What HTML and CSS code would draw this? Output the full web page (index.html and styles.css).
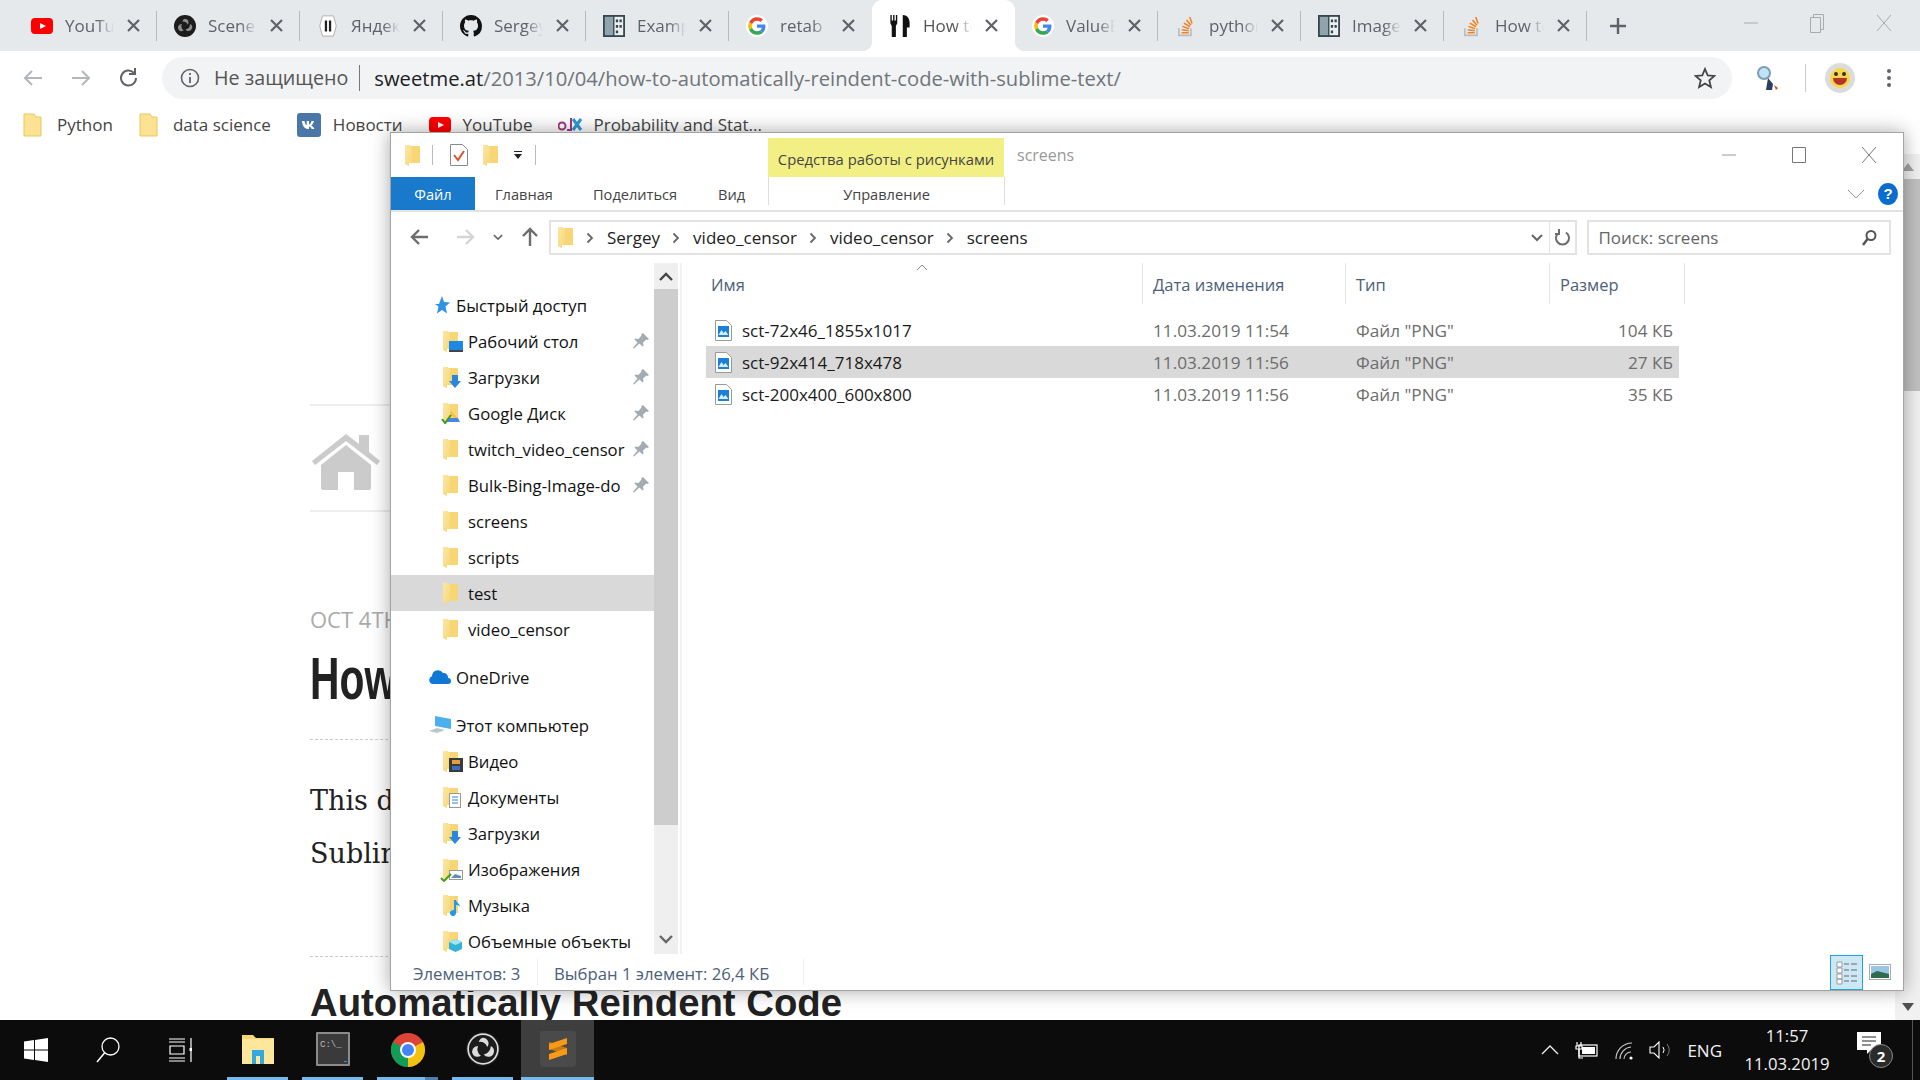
FILE: index.html
```html
<!DOCTYPE html>
<html lang="ru">
  <head>
    <meta charset="UTF-8" />
    <meta name="viewport" content="width=device-width, initial-scale=1.0" />
    <link rel="stylesheet" href="styles.css">
    <title>How to automatically reindent code with Sublime Text</title>
  </head>
  <body>
    <svg class="defs" width="0" height="0">
      <linearGradient id="fldgrad" x1="0" y1="0" x2="1" y2="1"><stop offset="0" stop-color="#fbe7a6"/><stop offset="1" stop-color="#f8d675"/></linearGradient>
      <symbol id="yt" viewBox="0 0 22 16"><rect width="22" height="16" rx="4" fill="#f00"/><path d="M9 5l6 3-6 3z" fill="#fff"/></symbol>
      <symbol id="obs" viewBox="0 0 24 24"><circle cx="12" cy="12" r="12" fill="#1c1c1c"/><circle cx="12" cy="12" r="10.500" fill="none" stroke="#ddd" stroke-width="1.200"/><path d="M12 4a4 4 0 0 1 3 6.500a6 6 0 0 0-6-3.500A4 4 0 0 1 12 4zM19.500 15a4 4 0 0 1-7 .8a6 6 0 0 0 5-6 4 4 0 0 1 2 5.200zM5 16a4 4 0 0 1 3.500-6.200a6 6 0 0 0 2 6.900A4 4 0 0 1 5 16z" fill="#ddd"/></symbol>
      <symbol id="obsfav" viewBox="0 0 24 24"><circle cx="12" cy="12" r="12" fill="#1c1c1c"/><path d="M12 4a4 4 0 0 1 3 6.500a6 6 0 0 0-6-3.500A4 4 0 0 1 12 4zM19.500 15a4 4 0 0 1-7 .8a6 6 0 0 0 5-6 4 4 0 0 1 2 5.200zM5 16a4 4 0 0 1 3.500-6.200a6 6 0 0 0 2 6.900A4 4 0 0 1 5 16z" fill="#8d8d8d"/></symbol>
      <symbol id="yandex" viewBox="0 0 20 24"><path d="M4 1h12l3 11-3 11H4L1 12z" fill="#fff" stroke="#aaa"/><rect x="6.500" y="6" width="2.500" height="12" fill="#222"/><rect x="11" y="6" width="2.500" height="12" fill="#222"/></symbol>
      <symbol id="github" viewBox="0 0 16 16"><path d="M8 0C3.580 0 0 3.580 0 8c0 3.540 2.290 6.530 5.470 7.590.4.070.55-.17.55-.38 0-.19-.01-.82-.01-1.490-2.010.37-2.530-.49-2.690-.94-.09-.23-.48-.94-.82-1.130-.28-.15-.68-.52-.01-.53.63-.01 1.080.58 1.230.82.72 1.210 1.870.87 2.330.66.07-.52.28-.87.51-1.070-1.780-.2-3.640-.89-3.640-3.950 0-.87.31-1.590.82-2.150-.08-.2-.36-1.020.08-2.120 0 0 .67-.21 2.200.82.64-.18 1.320-.27 2-.27s1.360.09 2 .27c1.530-1.040 2.200-.82 2.200-.82.44 1.100.16 1.920.08 2.120.51.56.82 1.270.82 2.150 0 3.070-1.870 3.750-3.650 3.950.29.25.54.73.54 1.480 0 1.070-.01 1.930-.01 2.200 0 .21.15.46.55.38A8.013 8.013 0 0 0 16 8c0-4.420-3.580-8-8-8z" fill="#111"/></symbol>
      <symbol id="book" viewBox="0 0 24 24"><rect width="24" height="24" fill="#37474f"/><rect x="2" y="2" width="9" height="20" fill="#90a4ae"/><rect x="12.500" y="2" width="9.500" height="20" fill="#eceff1"/><path d="M14 5h2.500v3H14zM18 5h2.500v3H18zM14 11h2.500v3H14zM18 11h2.500v3H18zM14 17h2.500v3H14z" fill="#37474f"/></symbol>
      <symbol id="google" viewBox="-6 -6 60 60"><circle cx="24" cy="24" r="30" fill="#fff"/><path fill="#EA4335" d="M24 9.500c3.540 0 6.710 1.220 9.210 3.600l6.850-6.850C35.900 2.380 30.470 0 24 0 14.620 0 6.510 5.380 2.560 13.220l7.980 6.190C12.430 13.720 17.740 9.500 24 9.500z"/><path fill="#4285F4" d="M46.980 24.550c0-1.570-.15-3.090-.38-4.550H24v9.020h12.940c-.58 2.960-2.260 5.480-4.780 7.180l7.730 6c4.510-4.180 7.090-10.360 7.090-17.650z"/><path fill="#FBBC05" d="M10.530 28.590c-.48-1.450-.76-2.990-.76-4.590s.27-3.140.76-4.590l-7.980-6.190C.92 16.460 0 20.120 0 24c0 3.880.92 7.540 2.560 10.780l7.970-6.190z"/><path fill="#34A853" d="M24 48c6.480 0 11.930-2.130 15.890-5.810l-7.730-6c-2.150 1.450-4.920 2.300-8.160 2.300-6.260 0-11.570-4.220-13.470-9.910l-7.980 6.190C6.510 42.620 14.620 48 24 48z"/></symbol>
      <symbol id="fork" viewBox="0 0 16 16"><path d="M1 0h1v4h1V0h1v4h1V0h1v6L5 8v8H2V8L1 6zM10 0c3 0 5 2 5 6v3h-2v7h-3z" fill="#111"/></symbol>
      <symbol id="so" viewBox="0 0 16 20"><path d="M1.500 12v6.500h11V12" fill="none" stroke="#bcbbbb" stroke-width="1.500"/><path d="M4 15.500h6.500v1.400H4zM4.200 12.700l6.400.9-.2 1.400-6.400-.9zM5 9.700l6 2.100-.5 1.300-6-2.100zM6.500 6.800l5.500 3.300-.8 1.200-5.500-3.300zM9 4l4.100 4.800-1.100.9L7.900 4.900zM12 1.500l2.200 5.900-1.300.5-2.200-5.900z" fill="#f48024"/></symbol>
      <symbol id="fld" viewBox="0 0 15 21"><path d="M0 0h5v1h10v17H4v3l-4-2z" fill="#f8d675"/><path d="M0 0h4l3 2v16H4v3l-4-2z" fill="url(#fldgrad)"/></symbol>
      <symbol id="bmfold" viewBox="0 0 19 24"><path d="M1 1h10l2 3h5v19H1z" fill="#fde293" stroke="#e9c85a"/></symbol>
      <symbol id="tabx" viewBox="0 0 13 13"><path d="M1 1l11 11M12 1L1 12" stroke="#5f6368" stroke-width="2.200"/></symbol>
      <symbol id="pin" viewBox="0 0 16 16"><path d="M10 0l6 6-1.500 1-1-.5-3.500 3 .5 3-1 1-3-3L1 15.500 0 15l4.500-5.500-3-3 1-1 3 .5 3-3.500-.5-1z" fill="#a3abb3"/></symbol>
      <symbol id="png" viewBox="0 0 17 21"><path d="M.5.500h11l5 5v15H.5z" fill="#fff" stroke="#9a9a9a"/><rect x="3" y="6" width="11" height="11" fill="#1e7fd8"/><path d="M3.500 15l3-5 2 3 2-2 3 4z" fill="#d5ecff"/></symbol>
      <symbol id="chev" viewBox="0 0 8 12"><path d="M1.500 1.500L6 6l-4.500 4.500" fill="none" stroke="#666" stroke-width="1.800"/></symbol>
      <symbol id="down" viewBox="0 0 12 8"><path d="M1 1l5 5 5-5" fill="none" stroke="#666" stroke-width="2"/></symbol>
    </svg>

    <div class="tabbar">
      <div class="tab"><svg class="fav"><use href="#yt"/></svg><span class="tab-title">YouTube</span><svg class="tab-x"><use href="#tabx"/></svg></div>
      <div class="tab"><svg class="fav"><use href="#obsfav"/></svg><span class="tab-title">Scene</span><svg class="tab-x"><use href="#tabx"/></svg></div>
      <div class="tab"><svg class="fav"><use href="#yandex"/></svg><span class="tab-title">Яндекс</span><svg class="tab-x"><use href="#tabx"/></svg></div>
      <div class="tab"><svg class="fav"><use href="#github"/></svg><span class="tab-title">Sergey</span><svg class="tab-x"><use href="#tabx"/></svg></div>
      <div class="tab"><svg class="fav"><use href="#book"/></svg><span class="tab-title">Example</span><svg class="tab-x"><use href="#tabx"/></svg></div>
      <div class="tab no-sep"><svg class="fav"><use href="#google"/></svg><span class="tab-title">retab</span><svg class="tab-x"><use href="#tabx"/></svg></div>
      <div class="tab tab-active"><svg class="fav"><use href="#fork"/></svg><span class="tab-title">How to</span><svg class="tab-x"><use href="#tabx"/></svg></div>
      <div class="tab"><svg class="fav"><use href="#google"/></svg><span class="tab-title">ValueE</span><svg class="tab-x"><use href="#tabx"/></svg></div>
      <div class="tab"><svg class="fav"><use href="#so"/></svg><span class="tab-title">python</span><svg class="tab-x"><use href="#tabx"/></svg></div>
      <div class="tab"><svg class="fav"><use href="#book"/></svg><span class="tab-title">Image</span><svg class="tab-x"><use href="#tabx"/></svg></div>
      <div class="tab"><svg class="fav"><use href="#so"/></svg><span class="tab-title">How to</span><svg class="tab-x"><use href="#tabx"/></svg></div>
      <svg class="newtab" width="18" height="18" viewBox="0 0 18 18"><path d="M9 1v16M1 9h16" stroke="#5f6368" stroke-width="2.400"/></svg>
      <div class="winbtns">
        <svg width="16" height="16" viewBox="0 0 16 16"><path d="M1 8h14" stroke="#a8abae"/></svg>
        <svg width="16" height="24" viewBox="0 0 16 24"><path d="M1.500 6.500h10v15h-10zM4.500 6.500v-3h10v15h-3" fill="none" stroke="#a8abae"/></svg>
        <svg width="18" height="18" viewBox="0 0 18 18"><path d="M2 1l14 16M16 1L2 17" stroke="#a8abae"/></svg>
      </div>
    </div>

    <div class="toolbar">
      <svg class="nav-ic" width="22" height="22" viewBox="0 0 22 22"><path d="M20 11H3M10 4l-7 7 7 7" fill="none" stroke="#b4b7ba" stroke-width="2"/></svg>
      <svg class="nav-ic" width="22" height="22" viewBox="0 0 22 22"><path d="M2 11h17M12 4l7 7-7 7" fill="none" stroke="#b4b7ba" stroke-width="2"/></svg>
      <svg class="nav-ic" width="22" height="22" viewBox="0 0 22 22"><path d="M18 11a7.500 7.500 0 1 1-2.200-5.300M17 1v6h-6" fill="none" stroke="#5f6368" stroke-width="2"/></svg>
      <div class="omnibox">
        <svg width="20" height="20" viewBox="0 0 20 20"><circle cx="10" cy="10" r="8.500" fill="none" stroke="#5f6368" stroke-width="1.600"/><path d="M10 9v6M10 5v2" stroke="#5f6368" stroke-width="1.800"/></svg>
        <span class="insecure">Не защищено</span>
        <span class="url"><b>sweetme.at</b>/2013/10/04/how-to-automatically-reindent-code-with-sublime-text/</span>
        <svg class="star" width="22" height="22" viewBox="0 0 22 22"><path d="M11 2l2.700 6.300 6.800.6-5.200 4.500 1.600 6.700L11 16.500 5.100 20.100l1.600-6.700L1.500 8.900l6.800-.6z" fill="none" stroke="#444" stroke-width="1.800"/></svg>
      </div>
      <svg class="ext" width="24" height="26" viewBox="0 0 24 26"><circle cx="8" cy="8" r="6" fill="#bfe3f5" stroke="#7b9db3" stroke-width="2"/><path d="M12 13l5 6-1 6h-6l1-6z" fill="#2c3e63"/><path d="M18 20l4 3-2 2z" fill="#c0562b"/></svg>
      <span class="tool-sep"></span>
      <svg class="avatar" width="30" height="30" viewBox="0 0 30 30"><circle cx="15" cy="15" r="15" fill="#dcdcdc"/><circle cx="15" cy="15" r="10" fill="#f9d648"/><circle cx="11" cy="11" r="2" fill="#333"/><circle cx="19" cy="11" r="2" fill="#333"/><path d="M8 15h14a7 7 0 0 1-14 0z" fill="#b3332a"/></svg>
      <svg class="dots" width="6" height="22" viewBox="0 0 6 22"><circle cx="3" cy="4" r="2" fill="#5f6368"/><circle cx="3" cy="11" r="2" fill="#5f6368"/><circle cx="3" cy="18" r="2" fill="#5f6368"/></svg>
    </div>

    <div class="bookmarks">
      <span class="bm"><svg width="19" height="24"><use href="#bmfold"/></svg>Python</span>
      <span class="bm"><svg width="19" height="24"><use href="#bmfold"/></svg>data science</span>
      <span class="bm bm-tight"><svg width="24" height="24" viewBox="0 0 24 24"><rect width="24" height="24" rx="3" fill="#4a76a8"/><path d="M5 8h2.500c.3 2.500 1.300 4 2.200 4.300V8H12v3.500c1-.2 2-1.500 2.500-3.500H17c-.5 2.200-1.700 3.700-2.700 4.400 1 .6 2.400 1.800 3.100 3.600h-2.700c-.5-1.400-1.600-2.500-2.700-2.600V16h-.8C7.800 16 5.300 13 5 8z" fill="#fff"/></svg>Новости</span>
      <span class="bm bm-tight"><svg width="22" height="20"><use href="#yt"/></svg>YouTube</span>
      <span class="bm bm-edx"><svg width="25" height="20" viewBox="0 0 25 20"><circle cx="4" cy="11" r="3.500" fill="none" stroke="#a23a7e" stroke-width="2"/><path d="M13 3v12h-4" fill="none" stroke="#a23a7e" stroke-width="2"/><path d="M15 4l8 11M23 4l-8 11" stroke="#2d9ad6" stroke-width="3"/></svg>Probability and Stat...</span>
    </div>

    <main class="page">
      <article class="post">
        <div class="home">
          <svg width="72" height="58" viewBox="0 0 72 58"><path d="M36 2L2 29l3 4L36 9l31 24 3-4-11-9V3H49v9z" fill="#cbcbcb"/><path d="M11 33L36 13l25 20v23a2 2 0 0 1-2 2H44V40H28v18H13a2 2 0 0 1-2-2z" fill="#cbcbcb"/></svg>
        </div>
        <p class="post-date">OCT 4TH, 2013</p>
        <h1 class="post-title">How to Automatically Reindent Code with Sublime Text</h1>
        <div class="post-rule"></div>
        <p class="post-text">This describes how to automatically reindent code in</p>
        <p class="post-text">Sublime Text.</p>
        <div class="post-rule post-rule-2"></div>
        <h2 class="post-h2">Automatically Reindent Code</h2>
      </article>
      <div class="scroll">
        <svg width="12" height="8" viewBox="0 0 12 8"><path d="M6 0l6 8H0z" fill="#a3a3a3"/></svg>
        <span class="scroll-thumb"></span>
        <svg class="scroll-end" width="12" height="8" viewBox="0 0 12 8"><path d="M0 0h12L6 8z" fill="#505050"/></svg>
      </div>
    </main>

    <section class="explorer">
      <header class="ex-title">
        <svg class="qa" width="15" height="21"><use href="#fld"/></svg>
        <span class="qa-sep"></span>
        <svg class="qa" width="18" height="22" viewBox="0 0 18 22"><path d="M.5.500h12l5 5v16H.5z" fill="#fff" stroke="#8a8a8a"/><path d="M4 11l4 5 6-9" fill="none" stroke="#d9532c" stroke-width="2"/></svg>
        <svg class="qa" width="15" height="21"><use href="#fld"/></svg>
        <svg class="qa" width="10" height="10" viewBox="0 0 10 10"><path d="M1 1h8v1H1zM1 4h8L5 9z" fill="#222"/></svg>
        <span class="qa-sep"></span>
        <span class="ctx-tool">Средства работы с рисунками</span>
        <span class="ex-name">screens</span>
        <div class="ex-btns">
          <svg width="16" height="16" viewBox="0 0 16 16"><path d="M1 8h14" stroke="#999"/></svg>
          <svg width="16" height="16" viewBox="0 0 16 16"><path d="M1.500 .5h13v15h-13z" fill="none" stroke="#777"/></svg>
          <svg width="16" height="16" viewBox="0 0 16 16"><path d="M1 0l14 16M15 0L1 16" stroke="#777"/></svg>
        </div>
      </header>

      <nav class="ribbon">
        <span class="rb-file">Файл</span>
        <span class="rb-tab rb-home">Главная</span>
        <span class="rb-tab rb-share">Поделиться</span>
        <span class="rb-tab rb-view">Вид</span>
        <span class="rb-manage">Управление</span>
        <svg class="rb-fold" width="18" height="10" viewBox="0 0 18 10"><path d="M1 1l8 8 8-8" fill="none" stroke="#9a9a9a"/></svg>
        <svg width="20" height="22" viewBox="0 0 20 22"><ellipse cx="10" cy="11" rx="10" ry="11" fill="#0a6cce"/><text x="10" y="16" text-anchor="middle" class="help-q">?</text></svg>
      </nav>

      <div class="ex-address">
        <svg class="ex-nav" width="20" height="18" viewBox="0 0 20 18"><path d="M19 9H3M10 2L3 9l7 7" fill="none" stroke="#6d6d6d" stroke-width="2.400"/></svg>
        <svg class="ex-nav ex-fwd" width="20" height="18" viewBox="0 0 20 18"><path d="M1 9h16M10 2l7 7-7 7" fill="none" stroke="#d5d5d5" stroke-width="2.400"/></svg>
        <svg class="ex-nav ex-recent" width="10" height="7"><use href="#down"/></svg>
        <svg class="ex-nav ex-up" width="18" height="20" viewBox="0 0 18 20"><path d="M9 19V3M2 9l7-7 7 7" fill="none" stroke="#6d6d6d" stroke-width="2.400"/></svg>
        <div class="crumbs">
          <svg width="15" height="21"><use href="#fld"/></svg>
          <svg class="crumb-sep crumb-first" width="8" height="12"><use href="#chev"/></svg><span>Sergey</span>
          <svg class="crumb-sep" width="8" height="12"><use href="#chev"/></svg><span>video_censor</span>
          <svg class="crumb-sep" width="8" height="12"><use href="#chev"/></svg><span>video_censor</span>
          <svg class="crumb-sep" width="8" height="12"><use href="#chev"/></svg><span>screens</span>
          <svg class="crumb-drop" width="12" height="8"><use href="#down"/></svg>
          <span class="crumb-refresh"><svg width="16" height="18" viewBox="0 0 16 18"><path d="M4 3.500a6.500 6.500 0 1 0 7 0M4 0v5H0" fill="none" stroke="#6d6d6d" stroke-width="2"/></svg></span>
        </div>
        <div class="ex-search">
          <span>Поиск: screens</span>
          <svg width="16" height="18" viewBox="0 0 16 18"><circle cx="10" cy="6.500" r="4.500" fill="none" stroke="#555" stroke-width="2"/><path d="M6.500 10L2 16" stroke="#555" stroke-width="2.500"/></svg>
        </div>
      </div>

      <div class="ex-main">
        <aside class="tree">
          <ul class="tree-list">
            <li class="top"><svg class="top-ic" width="20" height="18" viewBox="0 0 20 18"><path d="M12 0l2 6 6 .5-4.500 4 1.500 7-5-3.500-5 3.500 1.500-7L5 8h4zM0 6h5M1 9h4M2 12h3" fill="#2d93e6"/></svg>Быстрый доступ</li>
            <li><span class="ic"><svg width="15" height="21"><use href="#fld"/></svg><svg class="badge" width="14" height="11" viewBox="0 0 14 11"><rect width="14" height="9" fill="#1e88e5"/><rect y="9" width="14" height="2" fill="#444"/></svg></span>Рабочий стол<svg class="pin" width="16" height="16"><use href="#pin"/></svg></li>
            <li><span class="ic"><svg width="15" height="21"><use href="#fld"/></svg><svg class="badge" width="12" height="13" viewBox="0 0 12 13"><path d="M3 0h6v6h3l-6 7-6-7h3z" fill="#2a86dc"/></svg></span>Загрузки<svg class="pin" width="16" height="16"><use href="#pin"/></svg></li>
            <li><span class="ic"><svg width="15" height="21"><use href="#fld"/></svg><svg class="badge badge-wide" width="20" height="14" viewBox="0 0 20 14"><path d="M5 12h14l-2-4H7z" fill="#4a86e8"/><path d="M10 1l7 7h-4L9 4z" fill="#f6c244"/><path d="M1 9l3 4 6-8" fill="none" stroke="#3a9c2b" stroke-width="2"/></svg></span>Google Диск<svg class="pin" width="16" height="16"><use href="#pin"/></svg></li>
            <li><span class="ic"><svg width="15" height="21"><use href="#fld"/></svg></span>twitch_video_censor<svg class="pin" width="16" height="16"><use href="#pin"/></svg></li>
            <li><span class="ic"><svg width="15" height="21"><use href="#fld"/></svg></span>Bulk-Bing-Image-do<svg class="pin" width="16" height="16"><use href="#pin"/></svg></li>
            <li><span class="ic"><svg width="15" height="21"><use href="#fld"/></svg></span>screens</li>
            <li><span class="ic"><svg width="15" height="21"><use href="#fld"/></svg></span>scripts</li>
            <li class="tree-sel"><span class="ic"><svg width="15" height="21"><use href="#fld"/></svg></span>test</li>
            <li><span class="ic"><svg width="15" height="21"><use href="#fld"/></svg></span>video_censor</li>
            <li class="top group"><svg class="top-ic" width="22" height="14" viewBox="0 0 22 14"><path d="M4 14a4 4 0 0 1-1-7.800A6 6 0 0 1 14 3a4.500 4.500 0 0 1 5 5 3 3 0 0 1 0 6z" fill="#0f78d4"/></svg>OneDrive</li>
            <li class="top group"><svg class="top-ic" width="22" height="18" viewBox="0 0 22 18"><path d="M6 0l16 3v10L6 10z" fill="#4db0ee"/><path d="M0 15l8-3 8 2-8 3z" fill="#bcc4cc"/></svg>Этот компьютер</li>
            <li><span class="ic"><svg width="15" height="21"><use href="#fld"/></svg><svg class="badge" width="14" height="14" viewBox="0 0 14 14"><rect width="14" height="14" fill="#3a3a3a"/><rect x="3" y="2" width="8" height="4" fill="#e0a13c"/><rect x="3" y="8" width="8" height="4" fill="#3d6fc1"/></svg></span>Видео</li>
            <li><span class="ic"><svg width="15" height="21"><use href="#fld"/></svg><svg class="badge" width="12" height="15" viewBox="0 0 12 15"><rect x=".5" y=".5" width="11" height="14" fill="#fff" stroke="#999"/><path d="M3 4h6M3 7h6M3 10h6" stroke="#2a86dc"/></svg></span>Документы</li>
            <li><span class="ic"><svg width="15" height="21"><use href="#fld"/></svg><svg class="badge" width="12" height="13" viewBox="0 0 12 13"><path d="M3 0h6v6h3l-6 7-6-7h3z" fill="#2a86dc"/></svg></span>Загрузки</li>
            <li><span class="ic"><svg width="15" height="21"><use href="#fld"/></svg><svg class="badge" width="14" height="10" viewBox="0 0 14 10"><rect x=".5" y=".5" width="13" height="9" fill="#fff" stroke="#999"/><path d="M2 8l4-4 6 2v2z" fill="#5f8fb8"/></svg><svg class="tick" width="12" height="9" viewBox="0 0 12 9"><path d="M1 5l3 3 7-7" fill="none" stroke="#4a9c1c" stroke-width="2"/></svg></span>Изображения</li>
            <li><span class="ic"><svg width="15" height="21"><use href="#fld"/></svg><svg class="badge" width="12" height="16" viewBox="0 0 12 16"><path d="M5 0h2c0 3 4 3 4 7-1-2-3-2-4-2v8a3 3 0 1 1-2-2.800z" fill="#1e9be8"/></svg></span>Музыка</li>
            <li><span class="ic"><svg width="15" height="21"><use href="#fld"/></svg><svg class="badge" width="13" height="13" viewBox="0 0 13 13"><path d="M6.500 0L13 3v7l-6.500 3L0 10V3z" fill="#34b3d6"/><path d="M6.500 0L13 3 6.500 6 0 3z" fill="#a8e4f0"/></svg></span>Объемные объекты</li>
          </ul>
          <div class="tree-scroll">
            <span class="ts-btn"><svg width="14" height="9" viewBox="0 0 14 9"><path d="M1 8l6-6 6 6" fill="none" stroke="#444" stroke-width="2.400"/></svg></span>
            <span class="ts-thumb"></span>
            <span class="ts-end"><svg width="14" height="9" viewBox="0 0 14 9"><path d="M1 1l6 6 6-6" fill="none" stroke="#666" stroke-width="2.400"/></svg></span>
          </div>
        </aside>

        <div class="files">
          <div class="file-head">
            <span>Имя<svg class="sort" width="12" height="6" viewBox="0 0 12 6"><path d="M1 6l5-5 5 5" fill="none" stroke="#8a8a8a"/></svg></span>
            <span>Дата изменения</span>
            <span>Тип</span>
            <span>Размер</span>
          </div>
          <div class="file-row">
            <span class="file-name"><svg width="17" height="21"><use href="#png"/></svg>sct-72x46_1855x1017</span>
            <span>11.03.2019 11:54</span><span>Файл "PNG"</span><span class="file-size">104 КБ</span>
          </div>
          <div class="file-row file-sel">
            <span class="file-name"><svg width="17" height="21"><use href="#png"/></svg>sct-92x414_718x478</span>
            <span>11.03.2019 11:56</span><span>Файл "PNG"</span><span class="file-size">27 КБ</span>
          </div>
          <div class="file-row">
            <span class="file-name"><svg width="17" height="21"><use href="#png"/></svg>sct-200x400_600x800</span>
            <span>11.03.2019 11:56</span><span>Файл "PNG"</span><span class="file-size">35 КБ</span>
          </div>
        </div>
      </div>

      <footer class="ex-status">
        <span class="st-count">Элементов: 3</span>
        <span class="st-sel">Выбран 1 элемент: 26,4 КБ</span>
        <span class="st-view st-view-on"><svg width="22" height="25" viewBox="0 0 22 25"><path d="M1 2h5v5H1zM1 8h5v5H1zM1 14h5v5H1zM1 19h5v5H1z" fill="#fff" stroke="#999"/><path d="M8 4h5M15 4h6M8 10h5M15 10h6M8 16h5M15 16h6M8 21h5M15 21h6" stroke="#666"/></svg></span>
        <svg class="st-thumbs" width="22" height="16" viewBox="0 0 22 16"><rect x=".5" y=".5" width="21" height="15" fill="#fff" stroke="#aaa"/><rect x="2" y="2" width="18" height="12" fill="#9cc4e4"/><path d="M2 10l6-3 12 3v4H2z" fill="#2f6b4f"/></svg>
      </footer>
    </section>

    <footer class="taskbar">
      <span class="sys"><svg width="24" height="24" viewBox="0 0 24 24"><path d="M0 3.400l10-1.400v9.500H0zM11 1.900L24 0v11.500H11zM0 12.500h10V22L0 20.600zM11 12.500h13V24l-13-1.900z" fill="#fff"/></svg></span>
      <span class="sys"><svg width="24" height="26" viewBox="0 0 24 26"><circle cx="14.500" cy="9.500" r="8.500" fill="none" stroke="#fff" stroke-width="1.300"/><path d="M8.500 16L1 25" stroke="#fff" stroke-width="1.500"/></svg></span>
      <span class="sys"><svg width="24" height="24" viewBox="0 0 24 24"><path d="M1 1h16M1 23h16M1 20h16M1 4h16M2 8h14v8H2zM23 0v24" fill="none" stroke="#fff" stroke-width="1.200"/><rect x="21.500" y="10" width="3" height="3" fill="#fff"/></svg></span>
      <span class="app"><svg width="34" height="34" viewBox="0 0 34 34"><path d="M1 3h11l3 3h18v26H1z" fill="#f6d672"/><path d="M1 7h32v25H1z" fill="#fde79d"/><path d="M11 32V18h12v14h-4v-8h-4v8z" fill="#33a9e0"/></svg></span>
      <span class="app"><svg width="34" height="34" viewBox="0 0 34 34"><rect width="34" height="34" rx="1" fill="#8b8b8b"/><rect x="2" y="2" width="30" height="30" fill="#3a3a3a"/><text x="4" y="15" class="cmd-text">C:\_</text><rect x="28" y="29" width="3" height="1" fill="#2d93e6"/></svg></span>
      <span class="app app-split"><svg width="34" height="34" viewBox="0 0 34 34"><circle cx="17" cy="17" r="17" fill="#db4437"/><path d="M17 17L2 25a17 17 0 0 0 15 9z" fill="#0f9d58"/><path d="M17 17L2 25a17 17 0 0 1 0-16z" fill="#0f9d58"/><path d="M17 17l15-8a17 17 0 0 1-15 25z" fill="#f4c20d"/><circle cx="17" cy="17" r="8" fill="#fff"/><circle cx="17" cy="17" r="6" fill="#4285f4"/></svg></span>
      <span class="app"><svg width="34" height="34"><use href="#obs"/></svg></span>
      <span class="app app-on"><svg width="36" height="36" viewBox="0 0 36 36"><rect width="36" height="36" rx="3" fill="#4a4a4a"/><path d="M9 11l18 6v7L9 18z" fill="#c97a10"/><path d="M27 7L9 13v6l18-6zM27 17L9 23v6l18-6z" fill="#f79a17"/></svg></span>
      <div class="tray">
        <svg width="18" height="10" viewBox="0 0 18 10"><path d="M1 9l8-8 8 8" fill="none" stroke="#eee" stroke-width="1.300"/></svg>
        <svg class="tray-batt" width="24" height="18" viewBox="0 0 24 18"><path d="M2 1v4M6 1v4M1 5h6v3H1zM4 8v9h4" fill="none" stroke="#fff" stroke-width="1.200"/><rect x="4" y="4" width="18" height="11" fill="none" stroke="#fff" stroke-width="1.200"/><rect x="7" y="6" width="13" height="7" fill="#fff"/></svg>
        <svg class="tray-wifi" width="20" height="19" viewBox="0 0 20 19"><path d="M1 18A16 16 0 0 1 17 2M5 18A12 12 0 0 1 16 6M9 18a7 7 0 0 1 7-7" fill="none" stroke="#ccc" stroke-width="1.100"/><circle cx="16" cy="17" r="1.600" fill="#fff"/></svg>
        <svg class="tray-vol" width="23" height="18" viewBox="0 0 23 18"><path d="M1 6h4l5-5v16l-5-5H1z" fill="none" stroke="#fff" stroke-width="1.100"/><path d="M14 6a5 5 0 0 1 0 6" fill="none" stroke="#fff"/><path d="M18 3a10 10 0 0 1 0 12" fill="none" stroke="#777"/></svg>
        <span class="tray-lang">ENG</span>
        <span class="tray-clock"><span>11:57</span><span>11.03.2019</span></span>
        <span class="tray-note">
          <svg width="24" height="24" viewBox="0 0 24 24"><path d="M0 0h24v18H14l-4 4v-4H0z" fill="#fff"/><path d="M5 5h14M5 9h14M5 13h9" stroke="#222"/></svg>
          <span class="note-count">2</span>
        </span>
      </div>
      <span class="show-desk"></span>
    </footer>
  </body>
</html>
```

FILE: styles.css
```css
* {
  margin: 0;
  padding: 0;
  box-sizing: border-box;
}

html,
body {
  height: 1080px;
  overflow: hidden;
}

body {
  display: flex;
  flex-direction: column;
  position: relative;
  background: #fff;
  font-family: "Open Sans", "Liberation Sans", sans-serif;
  color: #1a1a1a;
}

.defs {
  position: absolute;
}

ul {
  list-style: none;
}

/* chrome tabs */
.tabbar {
  height: 51px;
  flex: none;
  display: flex;
  align-items: stretch;
  padding-left: 14px;
  background: #e6e9ec;
}

.tab {
  width: 143px;
  display: flex;
  align-items: center;
  padding-left: 17px;
  position: relative;
  font-size: 17px;
  color: #5f6368;
  background: linear-gradient(#b6babd, #b6babd) right 11px / 1px 30px no-repeat;
}

.no-sep {
  background: none;
}

.tab-active {
  background: #fff;
  border-radius: 10px 10px 0 0;
  color: #555;
}

.tab-active::before,
.tab-active::after {
  content: "";
  position: absolute;
  bottom: 0;
  width: 10px;
  height: 10px;
}

.tab-active::before {
  left: -10px;
  background: radial-gradient(circle at 0 0, transparent 10px, #fff 10.5px);
}

.tab-active::after {
  right: -10px;
  background: radial-gradient(circle at 100% 0, transparent 10px, #fff 10.5px);
}

.fav {
  width: 22px;
  height: 22px;
  flex: none;
}

.tab-title {
  width: 49px;
  margin-left: 12px;
  overflow: hidden;
  white-space: nowrap;
  -webkit-mask-image: linear-gradient(90deg, #000 65%, transparent);
  mask-image: linear-gradient(90deg, #000 65%, transparent);
}

.tab-x {
  width: 13px;
  height: 13px;
  flex: none;
  margin-left: 13px;
}

.newtab {
  align-self: center;
  margin-left: 22px;
}

.winbtns {
  margin-left: auto;
  display: flex;
  align-items: center;
  gap: 50px;
  padding: 0 27px 6px 0;
}

/* address bar */
.toolbar {
  height: 54px;
  flex: none;
  display: flex;
  align-items: center;
  padding-left: 22px;
}

.nav-ic {
  margin-right: 26px;
}

.nav-ic:nth-child(3) {
  margin-right: 22px;
}

.omnibox {
  width: 1570px;
  height: 42px;
  border-radius: 21px;
  background: #f1f3f4;
  display: flex;
  align-items: center;
  padding-left: 18px;
}

.insecure {
  margin-left: 14px;
  padding-right: 11px;
  border-right: 1px solid #777;
  font-size: 19.700px;
  line-height: 26px;
  color: #555;
  white-space: nowrap;
}

.url {
  margin-left: 14px;
  font-size: 20.200px;
  color: #70757a;
  white-space: nowrap;
}

.url b {
  font-weight: 400;
  color: #202124;
}

.star {
  margin-left: auto;
  margin-right: 16px;
}

.ext {
  margin-left: 24px;
}

.tool-sep {
  width: 1px;
  height: 28px;
  margin-left: 25px;
  background: #ccc;
}

.avatar {
  margin-left: 19px;
}

.dots {
  margin-left: 31px;
}

/* bookmarks */
.bookmarks {
  height: 49px;
  flex: none;
  display: flex;
  align-items: center;
  padding: 0 0 10px 23px;
  font-size: 17px;
  color: #444;
  gap: 26px;
}

.bm {
  display: flex;
  align-items: center;
  gap: 15px;
  white-space: nowrap;
}

.bm-tight {
  gap: 12px;
}

.bm-edx {
  gap: 10px;
}

.bm svg {
  flex: none;
}

/* page behind the window */
.page {
  flex: 1;
  display: flex;
  overflow: hidden;
  min-height: 0;
}

.post {
  flex: 1;
  padding: 250px 0 0 310px;
  overflow: hidden;
}

.home {
  width: 1100px;
  height: 108px;
  padding-top: 26px;
  border-top: 2px solid #eee;
  border-bottom: 2px solid #eee;
}

.post-date {
  margin-top: 92px;
  font-size: 22px;
  line-height: 30px;
  color: #aaa;
}

.post-title {
  width: 1800px;
  margin-top: 11px;
  font-family: "Liberation Sans", sans-serif;
  font-size: 60px;
  line-height: 68px;
  font-weight: 700;
  color: #222;
  white-space: nowrap;
  transform: scaleX(0.68);
  transform-origin: left;
}

.post-rule {
  width: 1100px;
  margin-top: 26px;
  border-top: 1px dashed #ccc;
}

.post-text {
  font-family: "DejaVu Serif", serif;
  font-size: 27px;
  line-height: 53px;
  color: #222;
  white-space: nowrap;
}

.post-rule + .post-text {
  margin-top: 34px;
}

.post-rule-2 {
  margin-top: 76px;
}

.post-h2 {
  margin-top: 26px;
  font-family: "Liberation Sans", sans-serif;
  font-size: 38.300px;
  line-height: 40px;
  color: #222;
  white-space: nowrap;
}

.scroll {
  width: 25px;
  flex: none;
  display: flex;
  flex-direction: column;
  align-items: center;
  padding-top: 9px;
  background: #f1f1f1;
}

.scroll-thumb {
  align-self: stretch;
  height: 212px;
  margin-top: 8px;
  background: #c1c1c1;
}

.scroll-end {
  margin-top: auto;
  margin-bottom: 9px;
}

/* explorer window, floats over the browser */
.explorer {
  position: absolute;
  left: 390px;
  top: 132px;
  width: 1514px;
  height: 859px;
  display: flex;
  flex-direction: column;
  background: #fff;
  border: 1px solid #a3a3a3;
  box-shadow: 0 0 18px rgba(0, 0, 0, 0.35);
  font-size: 16px;
}

.ex-title {
  height: 44px;
  flex: none;
  display: flex;
  align-items: center;
  padding-left: 14px;
}

.qa {
  margin-right: 15px;
  flex: none;
}

.qa-sep {
  width: 1px;
  height: 20px;
  margin: 0 17px 0 -3px;
  background: #bbb;
}

.ctx-tool {
  align-self: flex-end;
  width: 236px;
  height: 39px;
  margin-left: 215px;
  background: #f2f085;
  text-align: center;
  font-size: 14.800px;
  line-height: 42px;
  color: #444;
  white-space: nowrap;
}

.ex-name {
  margin-left: 13px;
  padding-bottom: 1px;
  color: #999;
}

.ex-btns {
  margin-left: auto;
  display: flex;
  gap: 54px;
  padding-right: 26px;
}

.ribbon {
  height: 35px;
  flex: none;
  display: flex;
  align-items: stretch;
  border-bottom: 2px solid #e3e3e3;
  font-size: 14.600px;
  color: #444;
  line-height: 34px;
}

.rb-file {
  width: 84px;
  background: #1979ca;
  color: #fff;
  text-align: center;
}

.rb-tab {
  white-space: nowrap;
}

.rb-home {
  width: 98px;
  margin-left: 20px;
}

.rb-share {
  width: 125px;
}

.rb-view {
  width: 50px;
}

.rb-manage {
  width: 237px;
  height: 28px;
  border-left: 1px solid #ddd;
  border-right: 1px solid #ddd;
  text-align: center;
}

.rb-fold {
  align-self: center;
  margin-left: auto;
  margin-right: 13px;
}

.ribbon svg:last-child {
  align-self: center;
  margin-right: 5px;
}

.help-q {
  font-family: "Liberation Sans", sans-serif;
  font-size: 15px;
  font-weight: 700;
  fill: #fff;
}

.ex-address {
  height: 51px;
  flex: none;
  display: flex;
  align-items: flex-start;
  padding: 8px 12px 0 18px;
}

.ex-nav {
  flex: none;
  margin-top: 8px;
}

.ex-fwd {
  margin-left: 27px;
}

.ex-recent {
  margin: 14px 0 0 17px;
}

.ex-up {
  margin: 7px 0 0 18px;
}

.crumbs {
  width: 1030px;
  height: 35px;
  margin-left: 10px;
  display: flex;
  align-items: center;
  padding-left: 7px;
  border: 2px solid #e3e3e3;
  font-size: 17px;
  color: #222;
}

.crumb-sep {
  margin: 0 13px 0 12px;
}

.crumb-first {
  margin-left: 13px;
}

.crumb-drop {
  margin-left: auto;
  margin-right: 6px;
}

.crumb-refresh {
  width: 26px;
  height: 100%;
  display: flex;
  align-items: center;
  justify-content: center;
  border-left: 1px solid #e3e3e3;
}

.ex-search {
  width: 304px;
  height: 35px;
  margin-left: 10px;
  display: flex;
  align-items: center;
  justify-content: space-between;
  padding: 0 12px 0 9px;
  border: 2px solid #e3e3e3;
  color: #666;
  font-size: 17px;
}

.ex-main {
  flex: 1;
  display: flex;
  min-height: 0;
}

.tree {
  width: 291px;
  flex: none;
  display: flex;
  border-right: 2px solid #f2f2f2;
}

.tree-list {
  width: 263px;
  flex: none;
  padding-top: 24px;
  font-size: 16.700px;
  color: #111;
  overflow: hidden;
}

.tree-list li {
  height: 36px;
  display: flex;
  align-items: center;
  padding-left: 52px;
  white-space: nowrap;
}

.tree-list .top {
  padding-left: 38px;
}

.tree-list .group {
  margin-top: 12px;
}

.top-ic {
  width: 22px;
  margin-right: 5px;
  flex: none;
}

.ic {
  width: 25px;
  height: 21px;
  flex: none;
  position: relative;
}

.badge {
  position: absolute;
  left: 6px;
  bottom: 0;
}

.badge-wide {
  left: -2px;
}

.tick {
  position: absolute;
  left: -3px;
  bottom: -2px;
}

.pin {
  margin-left: auto;
  margin-right: 5px;
  flex: none;
}

.tree-sel {
  background: #d9d9d9;
}

.tree-scroll {
  width: 24px;
  flex: none;
  display: flex;
  flex-direction: column;
  background: #efefef;
}

.ts-btn {
  height: 26px;
  display: flex;
  align-items: center;
  justify-content: center;
}

.ts-thumb {
  height: 536px;
  background: #cdcdcd;
}

.ts-end {
  height: 30px;
  margin-top: auto;
  display: flex;
  align-items: center;
  justify-content: center;
}

.files {
  flex: 1;
  padding-left: 24px;
}

.file-head,
.file-row {
  display: grid;
  grid-template-columns: 437px 203px 204px 129px;
  width: 973px;
  align-items: center;
}

.file-head {
  grid-template-columns: 437px 203px 204px 135px;
  width: 979px;
  height: 41px;
  margin-bottom: 10px;
  color: #4c607a;
  font-size: 16.500px;
}

.file-head span {
  position: relative;
  height: 100%;
  display: flex;
  align-items: center;
  padding-left: 10px;
  padding-top: 2px;
  border-right: 1px solid #e5e5e5;
}

.file-head span:first-child {
  padding-left: 5px;
}

.sort {
  position: absolute;
  left: 210px;
  top: 1px;
}

.file-row {
  height: 32px;
  color: #6d6d6d;
  font-size: 17.200px;
}

.file-row span {
  padding-left: 10px;
  white-space: nowrap;
}

.file-row .file-name {
  display: flex;
  align-items: center;
  padding-left: 9px;
  gap: 10px;
  color: #1a1a1a;
  font-size: 17px;
}

.file-sel {
  background: #d9d9d9;
}

.file-row .file-size {
  text-align: right;
  padding-right: 6px;
}

.ex-status {
  height: 36px;
  flex: none;
  display: flex;
  align-items: center;
  padding-left: 22px;
  font-size: 16.700px;
  color: #4c607a;
}

.st-count,
.st-sel {
  padding-top: 3px;
}

.st-count {
  width: 125px;
  border-right: 1px solid #eee;
}

.st-sel {
  width: 250px;
  margin-left: 16px;
  border-right: 1px solid #eee;
  white-space: nowrap;
}

.st-view {
  width: 33px;
  height: 35px;
  margin-left: auto;
  display: flex;
  align-items: center;
  justify-content: center;
}

.st-view-on {
  background: #cce8f7;
  border: 1px solid #26a0da;
}

.st-thumbs {
  margin: 0 12px 0 6px;
}

/* taskbar */
.taskbar {
  height: 60px;
  flex: none;
  display: flex;
  align-items: stretch;
  background: #0c0c0c;
  position: relative;
  z-index: 2;
}

.sys {
  width: 72px;
  display: flex;
  align-items: center;
  justify-content: center;
}

.app {
  width: 61px;
  margin-left: 14px;
  display: flex;
  align-items: center;
  justify-content: center;
  border-bottom: 3px solid #76b9ed;
}

.sys + .app {
  margin-left: 11px;
}

.app-split {
  border-bottom: 0;
  background: linear-gradient(90deg, #76b9ed 48px, #4d80ad 48px) bottom / 100% 3px no-repeat;
}

.app-on {
  width: 73px;
  margin-left: 8px;
  background: #3e3e3e;
}

.tray {
  margin-left: auto;
  display: flex;
  align-items: center;
  color: #f2f2f2;
  font-size: 16.700px;
}

.tray-batt {
  margin-left: 16px;
}

.tray-wifi {
  margin-left: 16px;
}

.tray-vol {
  margin-left: 14px;
}

.tray-lang {
  margin-left: 15px;
  font-size: 17px;
}

.tray-clock {
  width: 112px;
  margin-left: 9px;
  display: flex;
  flex-direction: column;
  align-items: center;
  line-height: 28px;
  white-space: nowrap;
}

.tray-note {
  width: 36px;
  height: 36px;
  margin-left: 14px;
  position: relative;
}

.note-count {
  position: absolute;
  right: 0;
  bottom: 0;
  width: 24px;
  height: 24px;
  border-radius: 50%;
  border: 1px solid #888;
  background: #2b2b2b;
  color: #fff;
  text-align: center;
  font-size: 15px;
  line-height: 22px;
  font-weight: 700;
}

.show-desk {
  width: 8px;
  margin-left: 19px;
  border-left: 1px solid #555;
}

.cmd-text {
  font-family: "Liberation Mono", monospace;
  font-size: 9px;
  fill: #bbb;
}
```
